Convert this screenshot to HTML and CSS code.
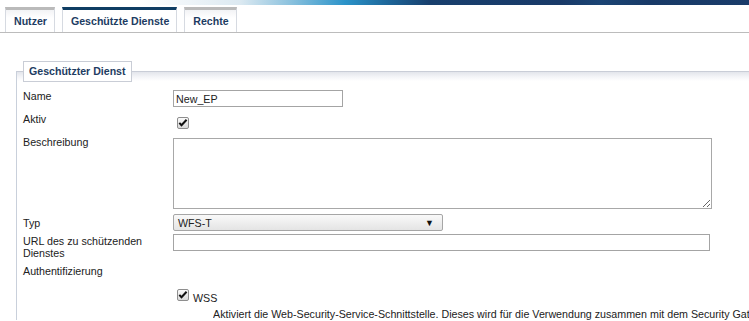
FILE: index.html
```
<!DOCTYPE html>
<html lang="de">
<head>
<meta charset="utf-8">
<title>Geschützter Dienst</title>
<link rel="stylesheet" href="styles.css">
</head>
<body>
<div class="banner"></div>
<nav class="tabs">
  <div class="tab">Nutzer</div>
  <div class="tab active">Geschützte Dienste</div>
  <div class="tab">Rechte</div>
</nav>
<section class="panel">
  <div class="legend">Geschützter Dienst</div>
  <div class="row r-name">
    <label class="lbl">Name</label>
    <input class="text name" type="text" value="New_EP">
  </div>
  <div class="row r-aktiv">
    <label class="lbl">Aktiv</label>
    <span class="cb" role="checkbox" aria-checked="true"><svg width="10" height="10" viewBox="0 0 10 10"><path d="M1.3 4.9 L3.5 7.3 L8.6 1.8" fill="none" stroke="#111" stroke-width="2"/></svg></span>
  </div>
  <div class="row r-desc">
    <label class="lbl">Beschreibung</label>
    <textarea class="area"></textarea>
  </div>
  <div class="row r-typ">
    <label class="lbl">Typ</label>
    <div class="select"><span>WFS-T</span><span class="arrow">▼</span></div>
  </div>
  <div class="row r-url">
    <label class="lbl">URL des zu schützenden Dienstes</label>
    <input class="text url" type="text" value="">
  </div>
  <div class="row r-auth">
    <label class="lbl">Authentifizierung</label>
  </div>
  <div class="option">
    <span class="cb" role="checkbox" aria-checked="true"><svg width="10" height="10" viewBox="0 0 10 10"><path d="M1.3 4.9 L3.5 7.3 L8.6 1.8" fill="none" stroke="#111" stroke-width="2"/></svg></span>
    <span class="opt-label">WSS</span>
  </div>
  <p class="hint">Aktiviert die Web-Security-Service-Schnittstelle. Dieses wird für die Verwendung zusammen mit dem Security Gateway benötigt.</p>
</section>
</body>
</html>
```
FILE: styles.css
```
html, body {
  margin: 0;
  padding: 0;
  overflow: hidden;
  background: #fff;
}
body {
  font-family: "Liberation Sans", Arial, sans-serif;
  font-size: 10.7px;
  color: #222;
}
.banner {
  height: 5px;
  background: linear-gradient(90deg, #fff 0, #fff 140px, #dce9f1 240px, #8cc2de 290px, #2b93c9 345px, #1d6497 390px, #183f6d 430px, #193a68 560px, #1b4474 600px, #183a67 650px, #1a3c6a 100%);
}
.tabs {
  display: flex;
  gap: 7px;
  margin-top: 2px;
  padding-left: 5px;
  border-bottom: 1px solid #bcbcbc;
}
.tab {
  height: 22px;
  line-height: 22px;
  padding: 0 7px 0 8px;
  border-top: 3px solid #bababa;
  border-left: 1px solid #d6dae1;
  border-right: 1px solid #d6dae1;
  background: linear-gradient(#f2f3f5, #fff 8px);
  font-size: 10.6px;
  font-weight: bold;
  color: #1d3c62;
}
.tab.active {
  border-top-color: #0f3d63;
  background: #fff;
}
.panel {
  position: relative;
  margin: 38px 0 0 16px;
  padding: 18px 0 0 6px;
  border-top: 1px solid #c9cdd7;
  border-left: 1px solid #c9d0db;
  background: linear-gradient(#e3e5eb, #f4f5f8 5px, #fff 9px);
}
.legend {
  position: absolute;
  left: 6px;
  top: -11px;
  height: 19px;
  line-height: 19px;
  padding: 0 5px;
  border: 1px solid #c9cdd6;
  background: #fff;
  font-size: 10.6px;
  font-weight: bold;
  color: #1d3c62;
}
.row {
  display: grid;
  grid-template-columns: 150px 1fr;
  align-items: start;
}
.lbl {
  display: block;
  line-height: 12px;
  color: #222;
}
.text {
  box-sizing: border-box;
  display: block;
  height: 17px;
  margin: 0;
  padding: 0 2px;
  border: 1px solid #a4a4a4;
  font: 10.7px "Liberation Sans", Arial, sans-serif;
  color: #222;
  outline: none;
}
.name { width: 170px; }
.url { width: 537px; }
.r-aktiv { margin-top: 6px; }
.r-aktiv .cb { margin: 4px 0 0 4px; }
.r-desc { margin-top: 7px; }
.area {
  box-sizing: border-box;
  display: block;
  width: 539px;
  height: 71px;
  margin: 2px 0 0 0;
  padding: 2px;
  border: 1px solid #a8a8a8;
  font: 10.7px "Liberation Sans", Arial, sans-serif;
}
.r-typ { margin-top: 5px; }
.r-typ .lbl { padding-top: 3px; }
.select {
  box-sizing: border-box;
  width: 270px;
  height: 17px;
  display: flex;
  align-items: center;
  justify-content: space-between;
  padding: 0 8px 0 4px;
  border: 1px solid #a6a6a6;
  border-radius: 2px;
  background: linear-gradient(#f9f9f9, #e4e4e4);
  color: #222;
}
.arrow {
  font-size: 9px;
  color: #111;
}
.r-url { margin-top: 3px; }
.r-url .lbl { padding-top: 1px; }
.r-auth { margin-top: 6px; }
.cb {
  box-sizing: border-box;
  display: inline-flex;
  width: 12px;
  height: 12px;
  border: 1px solid #8e8e8e;
  border-radius: 2px;
  background: linear-gradient(#fafafa, #d9d9d9);
}
.option {
  display: flex;
  align-items: flex-start;
  gap: 4px;
  margin: 12px 0 0 154px;
}
.opt-label {
  padding-top: 3px;
  line-height: 12px;
  color: #222;
}
.hint {
  margin: 4px 0 0 190px;
  line-height: 12px;
  white-space: nowrap;
  overflow: hidden;
  color: #222;
}
```
